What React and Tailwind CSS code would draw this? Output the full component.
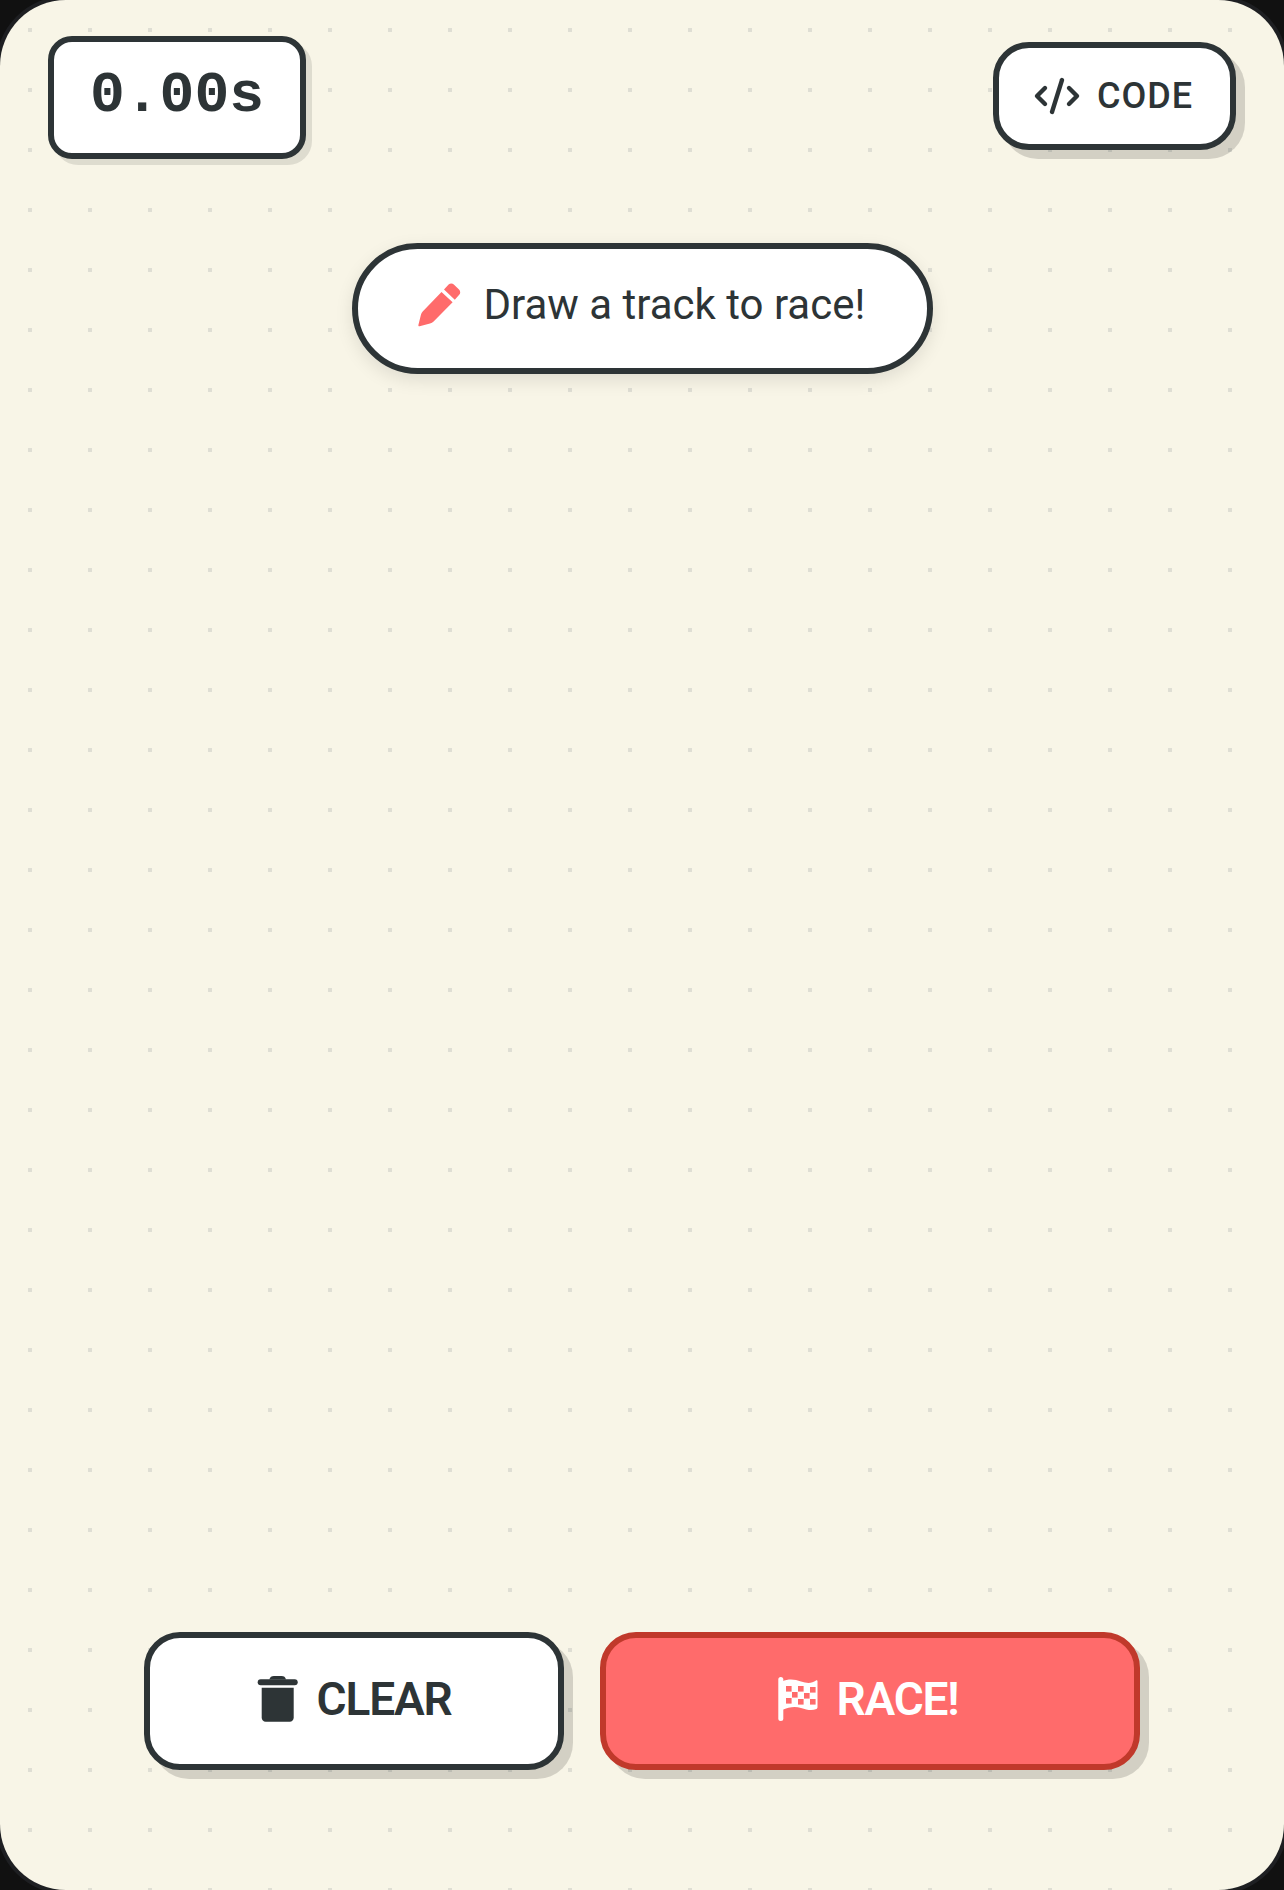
import React from "react";
import { CodeXml } from "lucide-react";

function Pencil() {
  return (
    <svg width="44" height="44" viewBox="0 0 44 44" className="shrink-0" fill="#ff6b6b">
      <path d="M23.5 9 34.6 19.2 15.6 38.4C14.6 39.4 13.4 40 12 40.4L1.6 43.2C.8 43.4.2 42.8.4 42L3 31.6C3.3 30.4 3.8 29.4 4.7 28.4Z" />
      <path d="M26 6.5 30.6 1.6C32 .2 34.4.2 35.8 1.4L41 6.4C42.6 8 42.6 10.4 41.2 11.8L36.8 16.8Z" />
    </svg>
  );
}

function Trash() {
  return (
    <svg width="42" height="46" viewBox="0 0 42 46" className="shrink-0" fill="#2d3436">
      <path d="M12.3 3.4C13 1.2 14.5 0 17 0H24.5C27 0 28.4 1.2 29 3.4Z" />
      <rect x="0.7" y="3.2" width="40" height="6" rx="3" />
      <path d="M4.7 11.7H36.7V41.7C36.7 44 35 45.7 32.7 45.7H8.7C6.4 45.7 4.7 44 4.7 41.7Z" />
    </svg>
  );
}

function CheckeredFlag() {
  const squares = [
    [15, 14], [27, 14], [39, 15],
    [21, 20], [33, 21],
    [15, 26], [27, 27], [39, 27],
  ];
  return (
    <svg width="52" height="54" viewBox="0 0 52 54" className="shrink-0">
      <rect x="7.3" y="5" width="5" height="44" rx="2.5" fill="#ffffff" />
      <path
        d="M11 9.5C18 6.5 24 7.5 30 9.5S41 11.5 45 8.5C45.6 8 46.5 8.4 46.5 9.2V35C46.5 36 46 36.6 45.4 37C41 39 36 38 30 36S18 35 11 38Z"
        fill="#ffffff"
      />
      {squares.map(([x, y]) => (
        <rect key={`${x}-${y}`} x={x} y={y} width="5.6" height="5.6" fill="#ff6b6b" />
      ))}
    </svg>
  );
}

export default function App() {
  return (
    <div className="h-[1890px] w-full bg-[#111111] overflow-hidden">
      <div className="flex h-full w-full flex-col rounded-[66px] bg-[#f8f5e7] bg-[radial-gradient(circle,#dfded4_2.2px,transparent_2.2px)] bg-[length:60px_60px] shadow-[0_0_0_4px_#1e1f22] text-[#2d3436]">
        <div className="flex items-start justify-between pl-12 pr-12 pt-9">
          <div className="flex h-[123px] w-[258px] items-center justify-center rounded-[24px] border-[6px] border-[#2d3436] bg-white pb-[4px] font-['Liberation_Mono'] text-[58px] font-bold leading-none shadow-[6px_6px_0_rgba(0,0,0,0.1)]">
            0.00s
          </div>
          <button className="mt-[6px] flex h-[108px] w-[243px] items-center justify-center gap-[16px] rounded-[36px] border-[6px] border-[#2d3436] bg-white pr-[3px] font-['Roboto'] text-[36px] font-medium leading-none tracking-[1px] shadow-[9px_9px_0_rgba(0,0,0,0.15)]">
            <CodeXml size={48} strokeWidth={2.2} />
            <span>CODE</span>
          </button>
        </div>
        <div className="mt-[84px] flex justify-center">
          <div className="flex h-[131px] w-[581px] items-center gap-[22px] rounded-full border-[6px] border-[#2d3436] bg-white pb-[8px] pl-[60px] font-['Roboto'] text-[42px] leading-none shadow-[0_6px_18px_rgba(0,0,0,0.1)]">
            <Pencil />
            <span>Draw a track to race!</span>
          </div>
        </div>
        <div className="mt-auto mb-[120px] flex justify-center gap-[36px]">
          <button className="flex h-[138px] w-[420px] items-center justify-center gap-[18px] rounded-[36px] border-[6px] border-[#2d3436] bg-white pb-[5px] font-['Roboto'] text-[46px] font-semibold leading-none tracking-[-1.2px] shadow-[9px_9px_0_rgba(0,0,0,0.15)]">
            <Trash />
            <span>CLEAR</span>
          </button>
          <button className="flex h-[138px] w-[540px] items-center justify-center gap-[14px] rounded-[36px] border-[6px] border-[#c0392b] bg-[#ff6b6b] pb-[5px] pr-[11px] font-['Roboto'] text-[46px] font-semibold leading-none tracking-[-1.2px] text-white shadow-[9px_9px_0_rgba(0,0,0,0.15)]">
            <CheckeredFlag />
            <span>RACE!</span>
          </button>
        </div>
      </div>
    </div>
  );
}
